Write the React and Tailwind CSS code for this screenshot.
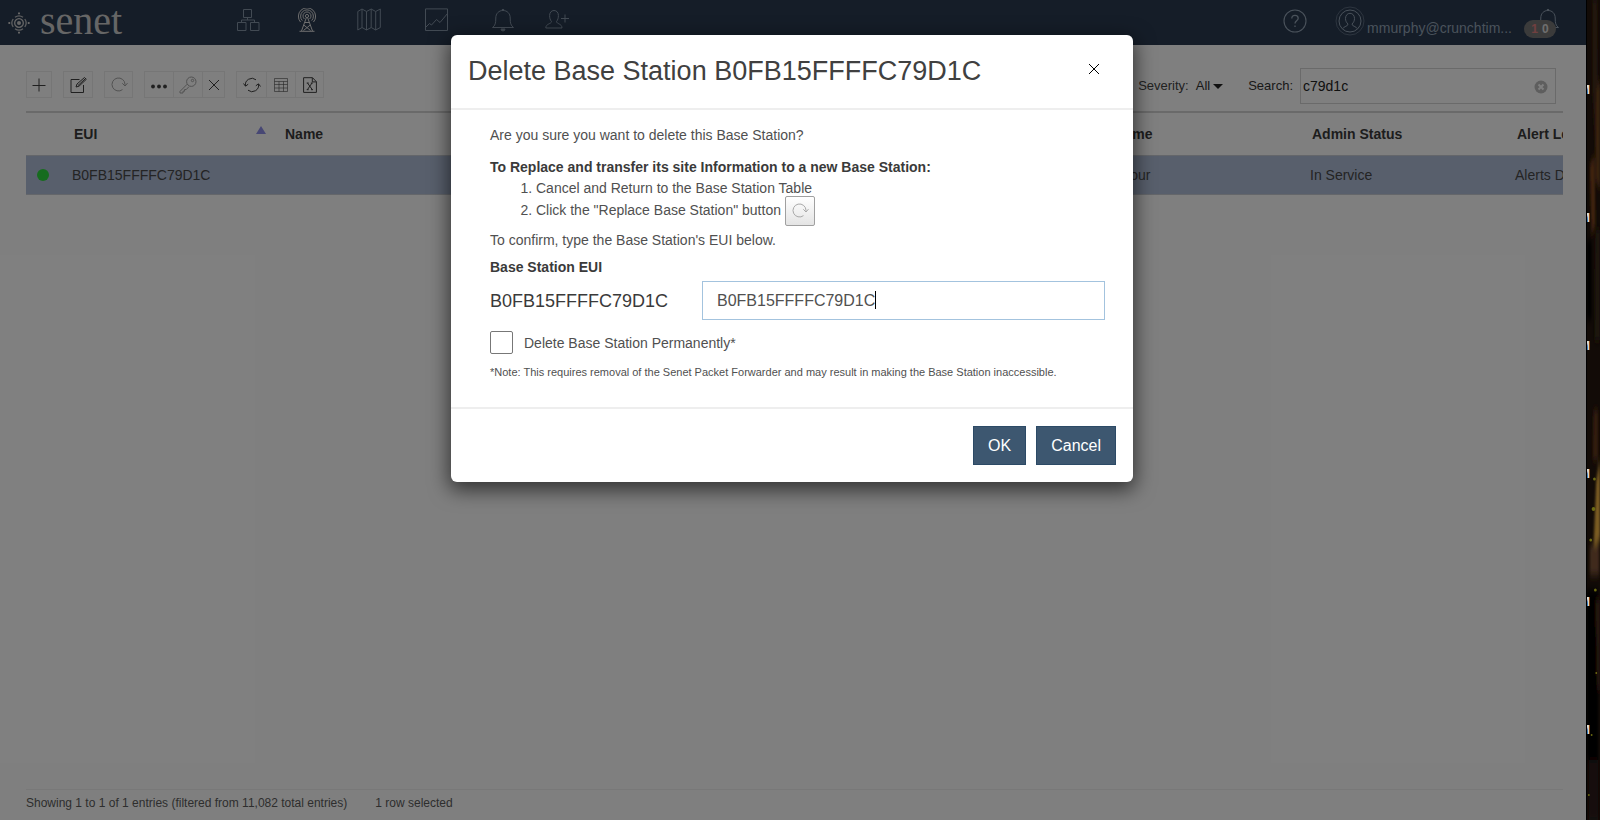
import React, { useState } from "react";

const EUI = "B0FB15FFFFC79D1C";

function Icon({ size = 24, className = "", children, sw = 1 }) {
  return (
    <svg
      width={size}
      height={size}
      viewBox={`0 0 ${size} ${size}`}
      fill="none"
      stroke="currentColor"
      strokeWidth={sw}
      className={`block shrink-0 ${className}`}
      aria-hidden="true"
    >
      {children}
    </svg>
  );
}

function LogoMark() {
  return (
    <Icon size={22} sw={1.3} className="text-[#cccccc]">
      <circle cx="11" cy="11" r="2" fill="currentColor" stroke="none" />
      {[0, 90, 180, 270].map((a) => (
        <g key={a} transform={`rotate(${a} 11 11)`}>
          <path d="M14 7.900a4.300 4.300 0 0 1 0 6.200" />
          <path d="M16.800 7a7 7 0 0 1 0 8" opacity="0.9" />
          <path d="M20.700 10v2" strokeWidth="1.800" />
        </g>
      ))}
    </Icon>
  );
}

const NetworkIcon = () => (
  <Icon>
    <path d="M7.5 1.5h8v8h-8zM1.5 14.5h8.500v8h-8.500zM14.500 14.500h8.500v8h-8.500zM11.500 9.500v2.500M5.500 14.500v-2.500h13v2.500" />
  </Icon>
);

const AntennaIcon = () => (
  <Icon>
    <circle cx="12" cy="8" r="1.600" />
    <path d="M9.400 11a4 4 0 1 1 5.200 0M7.300 12.600a6.400 6.400 0 1 1 9.400 0M5.500 14a8.600 8.600 0 1 1 13 0" />
    <path d="M11.300 9.800 6.500 23M12.700 9.800 17.500 23M10 14.500h4M8.800 17l6.700 5.500M15.200 17l-6.700 5.500M4.500 23.300h15" />
  </Icon>
);

const MapIcon = () => (
  <Icon>
    <path d="M.8 3.500 5 1l4.500 2.500L14.200 1l4.500 2.500L23.300 1v18.500L18.700 22l-4.500-2.500L9.500 22 5 19.500.8 22zM5 1v18.500M9.500 3.500V22M14.200 1v18.500M18.700 3.500V22" />
  </Icon>
);

const GraphIcon = () => (
  <Icon>
    <path d="M1.500.9h22v21.600h-22zM2 19l3.500-3.500 2 1.500 5-5.500 3.500 3L23.500 5.500" />
  </Icon>
);

function BellIcon() {
  return (
    <Icon>
      <path d="M1.500 19.500c2.800-2 3.300-4.500 3.300-9.500 0-4.500 3-7.500 7.200-7.500s7.200 3 7.200 7.500c0 5 .5 7.500 3.300 9.500z" />
      <path d="M10 21a2 2 0 0 0 4 0zM11 2.300a1 1 0 1 1 2 0z" fill="currentColor" />
    </Icon>
  );
}

const AddUserIcon = () => (
  <Icon>
    <path d="M6.500 13.500c-1.300-1.500-1.900-3.500-1.900-6 0-3 1.800-5 4.400-5s4.400 2 4.400 5c0 2.500-.6 4.500-1.900 6 0 2.500 5.500 2 5.500 6.500H.8c0-4.500 5.700-4 5.700-6.500zM16 10.500h8M20 6.500v8" />
  </Icon>
);

const HelpIcon = () => (
  <Icon sw={1.1}>
    <circle cx="12" cy="12" r="11" />
    <path d="M8.800 9.500c0-2 1.300-3.200 3.200-3.200s3.200 1.200 3.200 2.900c0 2.600-3.200 2.600-3.200 5.300M12 16.500v1.600" strokeWidth="1.300" />
  </Icon>
);

const AvatarIcon = () => (
  <Icon size={30}>
    <circle cx="15" cy="15" r="14" opacity="0.45" />
    <circle cx="15" cy="15" r="11" />
    <path d="M8 22.500c1-2.500 5-2 5-4.500-1.500-1.500-2.500-3-2.500-5.500 0-3 1.900-5.200 4.500-5.200s4.500 2.200 4.500 5.200c0 2.500-1 4-2.500 5.500 0 2.500 4 2 5 4.500" />
  </Icon>
);

const PlusIcon = () => (
  <Icon size={16}>
    <path d="M8 1.500v13M1.500 8.500h13" />
  </Icon>
);

const EditIcon = () => (
  <Icon size={18}>
    <path d="M10.500 3.500H2v13h12.500V9" />
    <path d="m7 11 1-3 7.500-6.500 1.800 1.800L10 10.200z" />
    <path d="m9 9.500 7-6.500" />
  </Icon>
);

const ReplaceIcon = () => (
  <Icon size={18}>
    <path d="M12.500 13.600A6.500 6.500 0 1 1 15 8.500v1" />
    <path d="m12.300 7.300 2.700 2.700 2.500-2.900" />
  </Icon>
);

const KeyIcon = () => (
  <Icon size={18}>
    <circle cx="12.300" cy="5.700" r="4.700" />
    <circle cx="13.500" cy="4.500" r="1.200" />
    <path d="M8.200 8.200 1 15.400V17h3v-1.800h1.600v-1.700h1.700l2.600-2.800" />
  </Icon>
);

const CloseIcon = ({ size = 12 }) => (
  <Icon size={size}>
    <path d={`M1 1 ${size - 1} ${size - 1}M${size - 1} 1 1 ${size - 1}`} />
  </Icon>
);

const RefreshIcon = () => (
  <Icon size={18}>
    <path d="M2.500 10A6.500 6.500 0 0 1 13 3.800M15.500 8A6.500 6.500 0 0 1 5 14.200" />
    <path d="m.5 7.500 2 2.700 2.700-2M17.500 10.500l-2-2.700-2.700 2" />
  </Icon>
);

const TableIcon = () => (
  <Icon size={16}>
    <path d="M1.500 1.500h13v13h-13zM1.500 4.500h13M1.500 7.500h13M1.500 11h13M6 4.500v10M10.500 4.500v10" strokeWidth="0.800" opacity="0.7" />
  </Icon>
);

const ExcelIcon = () => (
  <Icon size={16}>
    <path d="M1.600.7h8.900l3.900 4v10.700H1.600zM10.300.8v4.100h4" />
    <path d="m5.500 6 4.700 6.500M10 6l-4.500 6.500M4.700 6h2M8.800 6h2M4.700 12.700h2M9 12.700h2" />
  </Icon>
);

function ToolButton({ label, w, muted, joined, children }) {
  return (
    <button
      type="button"
      aria-label={label}
      className={`flex h-[27px] items-center justify-center border border-[#ececec] ${w} ${
        muted ? "text-[#a4a4a4]" : "text-[#404040]"
      } ${joined ? "border-l-0" : ""}`}
    >
      {children}
    </button>
  );
}

function Header() {
  return (
    <header className="flex h-[45px] items-start bg-[#2a3a50] text-[#8494a6]">
      <a href="#home" className="ml-2 flex w-[228px] items-start gap-[10px] text-[#cccccc]">
        <span className="pt-3">
          <LogoMark />
        </span>
        <span className="font-['Liberation_Serif',serif] text-[40px] leading-[42px]">senet</span>
      </a>
      <nav className="flex items-start pt-2">
        <a href="#network" aria-label="Network"><NetworkIcon /></a>
        <a href="#stations" aria-label="Base stations" className="ml-[35px] text-[#dcdcdc]"><AntennaIcon /></a>
        <a href="#map" aria-label="Map" className="ml-[38px]"><MapIcon /></a>
        <a href="#reports" aria-label="Reports" className="ml-[43px]"><GraphIcon /></a>
        <a href="#alerts" aria-label="Alerts" className="ml-[43px]"><BellIcon /></a>
        <a href="#users" aria-label="Add user" className="ml-[30px]"><AddUserIcon /></a>
      </nav>
      <div className="ml-auto flex items-start text-[#94a4b6]">
        <button type="button" aria-label="Help" className="mt-[9px]"><HelpIcon /></button>
        <button type="button" className="ml-7 flex items-start gap-[2px] pt-[6px]">
          <AvatarIcon />
          <span className="pt-3 text-sm">mmurphy@crunchtim...</span>
        </button>
        <button type="button" aria-label="Notifications" className="relative mr-[26px] ml-6 mt-2">
          <BellIcon />
          <span className="absolute top-3 -left-3 flex h-[18px] w-8 items-center justify-center gap-1 rounded-full bg-[#777777] text-xs font-bold text-[#dddddd]">
            <span className="text-[#e08080]">1</span>
            <span>0</span>
          </span>
        </button>
      </div>
    </header>
  );
}

function Toolbar() {
  const [query, setQuery] = useState("c79d1c");
  return (
    <div className="flex h-[68px] items-start justify-between border-b-2 border-[#d4d4d4] pt-[23px]">
      <div className="flex pt-[3px]">
        <ToolButton label="Add" w="w-[26px]"><PlusIcon /></ToolButton>
        <div className="ml-[11px]"><ToolButton label="Edit" w="w-[30px]"><EditIcon /></ToolButton></div>
        <div className="ml-[11px]"><ToolButton label="Replace" w="w-[29px]" muted><ReplaceIcon /></ToolButton></div>
        <div className="ml-[11px] flex">
          <ToolButton label="More" w="w-[30px]">
            <Icon size={16}>
              <g fill="currentColor" stroke="none">
                <circle cx="2" cy="9.500" r="1.900" />
                <circle cx="8" cy="9.500" r="1.900" />
                <circle cx="14" cy="9.500" r="1.900" />
              </g>
            </Icon>
          </ToolButton>
          <ToolButton label="Keys" w="w-[29px]" muted joined><KeyIcon /></ToolButton>
          <ToolButton label="Delete" w="w-[22px]" joined><CloseIcon /></ToolButton>
        </div>
        <div className="ml-[11px] flex">
          <ToolButton label="Refresh" w="w-[31px]"><RefreshIcon /></ToolButton>
          <ToolButton label="Columns" w="w-[29px]" joined><TableIcon /></ToolButton>
          <ToolButton label="Export" w="w-[28px]" joined><ExcelIcon /></ToolButton>
        </div>
      </div>
      <div className="mr-[7px] flex h-9 items-center text-[13px] text-[#444444]">
        <span>Severity:</span>
        <button type="button" className="ml-[7px] flex items-center gap-[3px] text-[#333333]">
          All
          <svg width="10" height="5" viewBox="0 0 10 5" aria-hidden="true"><path d="M0 0h10L5 5z" fill="#222222" /></svg>
        </button>
        <label htmlFor="search" className="ml-[25px] text-[#333333]">Search:</label>
        <div className="relative ml-[7px]">
          <input
            id="search"
            value={query}
            onChange={(e) => setQuery(e.target.value)}
            className="block h-9 w-[256px] border border-[#d4d4d4] bg-transparent pr-8 pl-[2px] text-sm text-[#222222] outline-none"
          />
          <button type="button" aria-label="Clear search" onClick={() => setQuery("")} className="absolute top-3 right-2">
            <svg width="14" height="14" viewBox="0 0 14 14" className="block" aria-hidden="true">
              <circle cx="7" cy="7" r="6.500" fill="#bcbcbc" />
              <path d="m4.500 4.500 5 5M9.500 4.500l-5 5" stroke="#ffffff" strokeWidth="2" />
            </svg>
          </button>
        </div>
      </div>
    </div>
  );
}

function Stations() {
  return (
    <div className="overflow-hidden">
      <table className="w-[1621px] table-fixed border-collapse text-left text-sm text-[#484848]">
        <colgroup>
          <col className="w-[38px]" />
          <col className="w-[211px]" />
          <col className="w-[820px]" />
          <col className="w-[207px]" />
          <col className="w-[205px]" />
          <col />
        </colgroup>
        <thead>
          <tr className="h-[42px] text-[#3a3a3a] [&>th]:pl-[10px]">
            <td />
            <th scope="col">
              <span className="flex items-center justify-between">
                EUI
                <svg width="10" height="8" viewBox="0 0 10 8" className="mr-[9px] mb-2" aria-hidden="true">
                  <path d="M5 0l5 8H0z" fill="#8f8fe8" />
                </svg>
              </span>
            </th>
            <th scope="col">Name</th>
            <th scope="col">Uptime</th>
            <th scope="col">Admin Status</th>
            <th scope="col">Alert Level</th>
          </tr>
        </thead>
        <tbody>
          <tr className="h-[39px] border-y border-[#c8ccd4] bg-[#b0bed9] [&>td]:pl-2">
            <td>
              <span className="ml-[3px] block size-3 rounded-full bg-[#2cd83c]" />
            </td>
            <td>{EUI}</td>
            <td />
            <td>10 hour</td>
            <td>In Service</td>
            <td>Alerts Disabled</td>
          </tr>
        </tbody>
      </table>
    </div>
  );
}

function DeleteDialog() {
  const [value, setValue] = useState(EUI);
  return (
    <div className="absolute inset-0 flex items-start justify-center bg-black/50 pt-[35px] pr-[2px]">
      <section
        role="dialog"
        aria-modal="true"
        aria-labelledby="dialog-title"
        className="w-[682px] rounded-md bg-white text-sm text-[#505050] shadow-[0_6px_20px_2px_rgba(0,0,0,0.6)]"
      >
        <div className="flex h-[75px] items-center justify-between border-b-2 border-[#eeeeee] pr-[33px] pb-[2px] pl-[17px]">
          <h1 id="dialog-title" className="text-[27px] leading-9 text-[#404040]">Delete Base Station {EUI}</h1>
          <button type="button" aria-label="Close" className="pb-1 text-black"><CloseIcon /></button>
        </div>
        <div className="h-[299px] border-b-2 border-[#eeeeee] pt-[15px] pr-[28px] pl-[39px]">
          <p className="leading-5">Are you sure you want to delete this Base Station?</p>
          <p className="mt-3 leading-5 font-bold text-[#3a3a3a]">
            To Replace and transfer its site Information to a new Base Station:
          </p>
          <ol className="list-decimal pl-[46px]">
            <li className="leading-[22px]">Cancel and Return to the Base Station Table</li>
            <li className="h-7 leading-[22px]">
              Click the "Replace Base Station" button{" "}
              <button
                type="button"
                aria-label="Replace Base Station"
                className="-my-1 inline-flex h-[30px] w-[30px] items-center justify-center rounded-xs border border-[#a0a0a0] bg-linear-to-b from-white to-[#e4e4e4] align-middle text-[#a8a8a8]"
              >
                <ReplaceIcon />
              </button>
            </li>
          </ol>
          <p className="mt-[3px] leading-5">To confirm, type the Base Station's EUI below.</p>
          <label htmlFor="confirm" className="mt-[7px] block leading-5 font-bold text-[#3a3a3a]">Base Station EUI</label>
          <div className="mt-1 flex items-center">
            <span className="w-[212px] text-lg text-[#3a3a3a]">{EUI}</span>
            <div className="relative flex-1">
              <input
                id="confirm"
                value={value}
                onChange={(e) => setValue(e.target.value)}
                className="block h-[39px] w-full border border-[#a3c3de] px-[14px] text-base text-[#505050] outline-none"
              />
              <span className="absolute top-[10px] left-[173px] h-[18px] w-px bg-black" aria-hidden="true" />
            </div>
          </div>
          <div className="mt-[11px] flex items-center gap-[11px]">
            <input
              id="permanent"
              type="checkbox"
              className="size-[23px] appearance-none rounded-xs border border-[#777777] bg-white"
            />
            <label htmlFor="permanent">Delete Base Station Permanently*</label>
          </div>
          <p className="mt-2 text-[11px] leading-5">
            *Note: This requires removal of the Senet Packet Forwarder and may result in making the Base Station inaccessible.
          </p>
        </div>
        <div className="flex justify-end gap-[10px] px-[17px] pt-[17px] pb-[17px] text-base text-white">
          <button type="button" className="h-[39px] border border-[#2c4a66] bg-[#3d5770] px-[14px]">OK</button>
          <button type="button" className="h-[39px] border border-[#2c4a66] bg-[#3d5770] px-[14px]">Cancel</button>
        </div>
      </section>
    </div>
  );
}

function Desktop() {
  return (
    <aside className="relative w-[14px] shrink-0 overflow-hidden border-l border-black bg-[#120b07]">
      <svg className="absolute inset-0 h-full w-full" viewBox="0 0 14 820" preserveAspectRatio="none" aria-hidden="true">
        <defs>
          <filter id="bark" x="-50%" y="-10%" width="200%" height="120%">
            <feGaussianBlur stdDeviation="1.2 4" />
          </filter>
        </defs>
        <g filter="url(#bark)">
          <path d="M6 0h5l1 120-3 30-3-60z" fill="#24150c" />
          <path d="M10 90l4-10v110l-5-10z" fill="#38200f" />
          <path d="M3 165l5-10 1 70-4 10z" fill="#41240f" />
          <path d="M9 230h5v110H8z" fill="#1d120a" />
          <path d="M0 240h5v80H0z" fill="#060403" />
          <path d="M7 410h5v50H6z" fill="#301a0e" />
          <path d="M10 480l4-20v80l-7 8z" fill="#7a5c22" />
          <path d="M3 545h10v30H3z" fill="#402a1a" />
          <path d="M0 590h12v170H0z" fill="#050402" />
          <path d="M9 600h5v90h-3z" fill="#21140a" />
          <path d="M2 760h10v60H2z" fill="#190f08" />
        </g>
        <g fill="#6b6a12">
          <circle cx="8" cy="479" r="1.500" />
          <circle cx="7" cy="509" r="2" />
          <circle cx="4" cy="540" r="1.500" />
          <circle cx="9" cy="590" r="1.500" />
          <circle cx="10" cy="673" r="1" />
          <circle cx="5" cy="735" r="1" />
          <circle cx="2" cy="795" r="1" />
        </g>
      </svg>
      <div className="relative flex flex-col gap-[110px] pt-[81px] text-[13px] leading-[18px] font-bold text-[#dddddd]">
        {[0, 1, 2, 3, 4, 5].map((n) => (
          <div key={n} className="flex w-[3px] justify-end overflow-hidden">M</div>
        ))}
      </div>
    </aside>
  );
}

export default function App() {
  return (
    <div className="flex min-h-screen font-['Liberation_Sans',Arial,sans-serif]">
      <div className="relative flex min-w-0 flex-1 flex-col bg-white">
        <Header />
        <main className="flex flex-1 flex-col pr-[23px] pl-[26px]">
          <Toolbar />
          <Stations />
          <footer className="mt-auto flex gap-7 border-t border-[#f0f0f0] pt-1 pb-[7px] text-xs leading-[19px] text-[#5c5c5c]">
            <span>Showing 1 to 1 of 1 entries (filtered from 11,082 total entries)</span>
            <span>1 row selected</span>
          </footer>
        </main>
        <DeleteDialog />
      </div>
      <Desktop />
    </div>
  );
}
